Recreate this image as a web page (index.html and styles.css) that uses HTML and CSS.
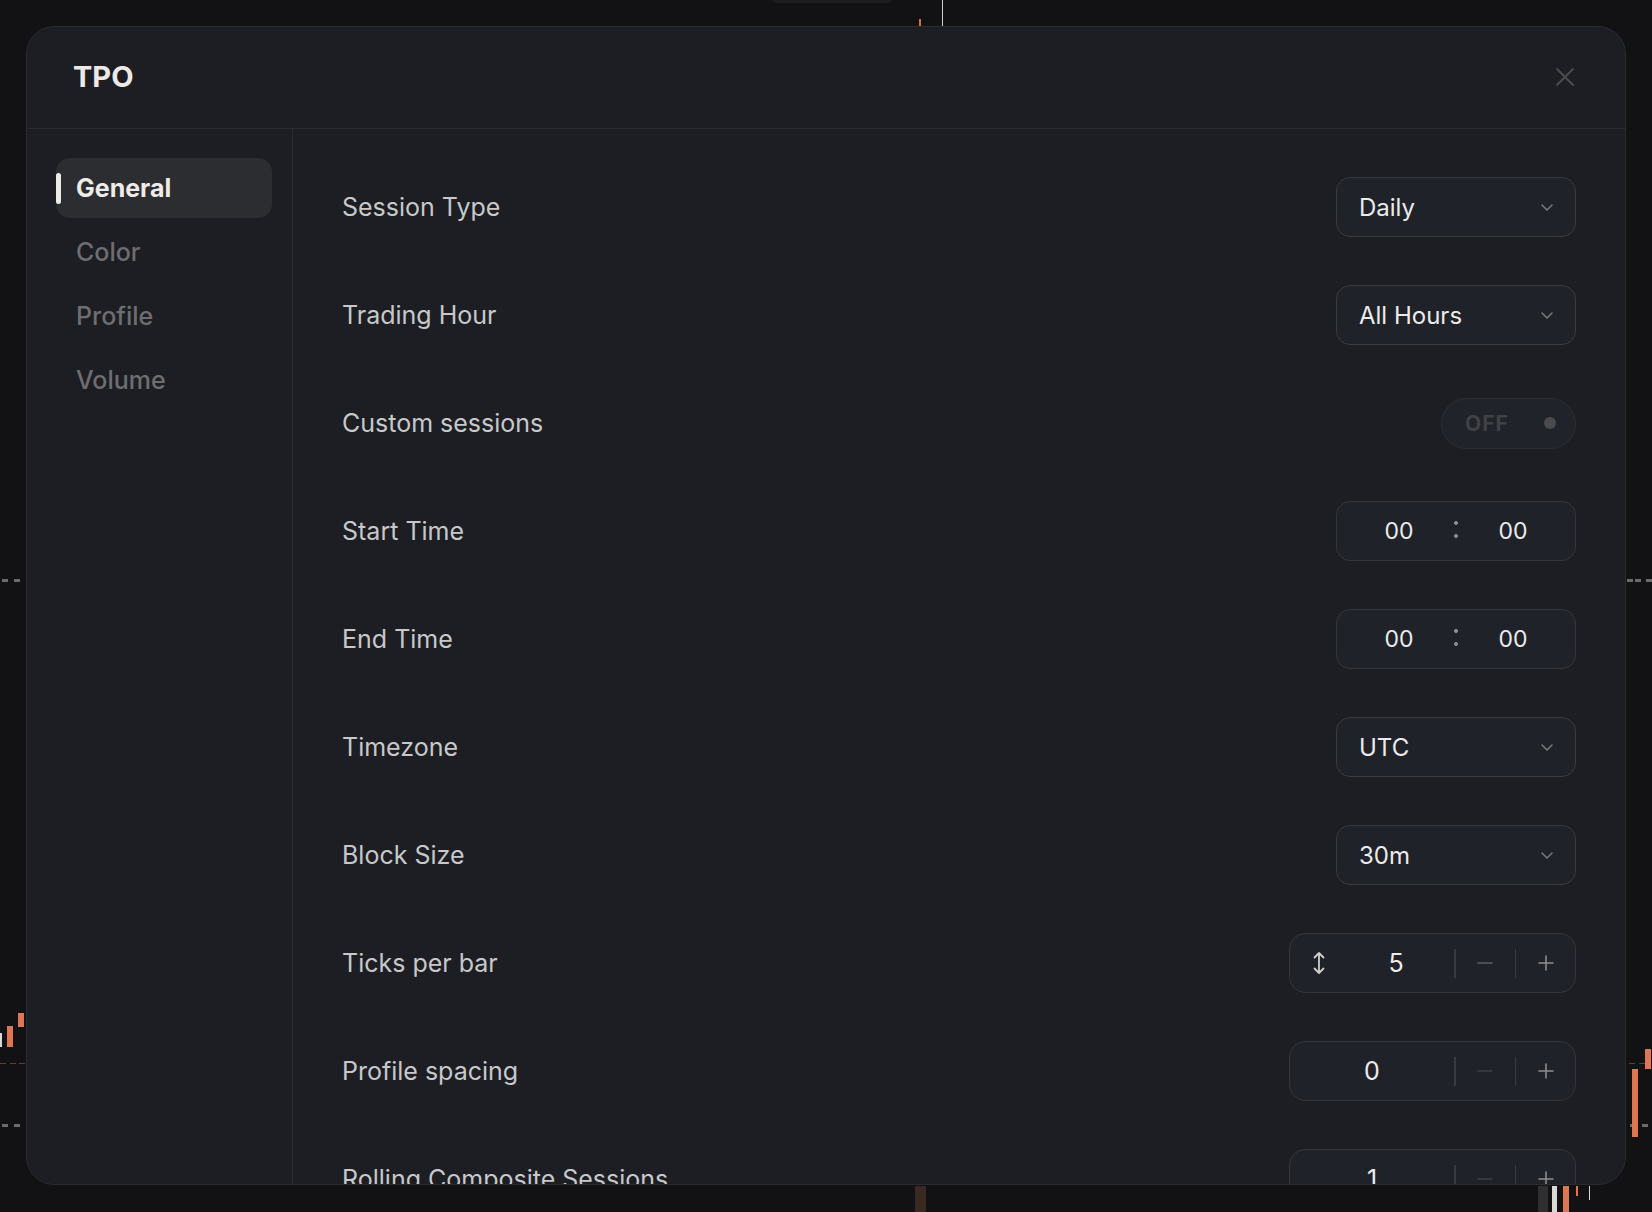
FILE: index.html
```html
<!DOCTYPE html>
<html lang="en">
<head>
    <meta charset="UTF-8">
    <meta name="viewport" content="width=device-width, initial-scale=1.0">
    <title>TPO Settings</title>
    <link rel="stylesheet" href="styles.css">
</head>
<body>

    <!-- Chart bits peeking out behind the dialog -->
    <div class="chart">
        <span class="mark top-pill"></span>
        <span class="mark top-line"></span>
        <span class="mark top-tick"></span>
        <span class="mark dash-grey" style="left:2px;top:579px"></span>
        <span class="mark dash-grey" style="left:14px;top:579px"></span>
        <span class="mark dash-grey" style="left:1627px;top:579px"></span>
        <span class="mark dash-grey" style="left:1635px;top:579px"></span>
        <span class="mark dash-grey" style="left:1646px;top:579px"></span>
        <span class="mark dash-grey" style="left:2px;top:1124px"></span>
        <span class="mark dash-grey" style="left:14px;top:1124px"></span>
        <span class="mark dash-grey" style="left:1630px;top:1124px"></span>
        <span class="mark dash-grey" style="left:1642px;top:1124px"></span>
        <span class="mark candle-white" style="left:0;top:1033px;height:14px"></span>
        <span class="mark candle" style="left:7px;top:1026px;height:21px"></span>
        <span class="mark candle" style="left:18px;top:1013px;height:14px"></span>
        <span class="mark dash-red" style="left:0;top:1063px"></span>
        <span class="mark dash-red" style="left:10px;top:1063px"></span>
        <span class="mark dash-red" style="left:19px;top:1063px"></span>
        <span class="mark dash-red" style="left:1629px;top:1063px"></span>
        <span class="mark dash-red" style="left:1639px;top:1063px"></span>
        <span class="mark candle" style="left:1632px;top:1069px;height:68px"></span>
        <span class="mark candle" style="left:1645px;top:1049px;height:20px"></span>
        <span class="mark candle-dim" style="left:915px;top:1186px;height:26px"></span>
        <span class="mark candle-grey" style="left:1538px;top:1186px;height:26px"></span>
        <span class="mark candle-white" style="left:1552px;top:1186px;height:26px;width:5px"></span>
        <span class="mark candle" style="left:1563px;top:1186px;height:26px"></span>
        <span class="mark candle" style="left:1576px;top:1186px;height:10px;width:2px"></span>
        <span class="mark candle-white" style="left:1589px;top:1186px;height:14px;width:1px"></span>
    </div>

    <div class="modal">
        <header class="modal-header">
            <h1 class="modal-title">TPO</h1>
            <button class="close-btn" aria-label="Close">
                <svg width="18" height="18" viewBox="0 0 18 18"><path d="M1 1L17 17M17 1L1 17" stroke="#4e4e50" stroke-width="1.8" stroke-linecap="round"/></svg>
            </button>
        </header>

        <div class="modal-body">
            <nav class="side-nav">
                <a class="nav-item active">General</a>
                <a class="nav-item">Color</a>
                <a class="nav-item">Profile</a>
                <a class="nav-item">Volume</a>
            </nav>

            <div class="settings">
                <div class="row">
                    <span class="label">Session Type</span>
                    <div class="select"><span>Daily</span><svg class="chev" width="12" height="7" viewBox="0 0 12 7"><path d="M1 1L6 6L11 1" fill="none" stroke="#7a7a7c" stroke-width="1.5" stroke-linecap="round" stroke-linejoin="round"/></svg></div>
                </div>
                <div class="row">
                    <span class="label">Trading Hour</span>
                    <div class="select"><span>All Hours</span><svg class="chev" width="12" height="7" viewBox="0 0 12 7"><path d="M1 1L6 6L11 1" fill="none" stroke="#7a7a7c" stroke-width="1.5" stroke-linecap="round" stroke-linejoin="round"/></svg></div>
                </div>
                <div class="row">
                    <span class="label">Custom sessions</span>
                    <div class="toggle"><span class="toggle-text">OFF</span><span class="toggle-dot"></span></div>
                </div>
                <div class="row">
                    <span class="label">Start Time</span>
                    <div class="time"><span class="num">00</span><span class="colon"></span><span class="num">00</span></div>
                </div>
                <div class="row">
                    <span class="label">End Time</span>
                    <div class="time"><span class="num">00</span><span class="colon"></span><span class="num">00</span></div>
                </div>
                <div class="row">
                    <span class="label">Timezone</span>
                    <div class="select"><span>UTC</span><svg class="chev" width="12" height="7" viewBox="0 0 12 7"><path d="M1 1L6 6L11 1" fill="none" stroke="#7a7a7c" stroke-width="1.5" stroke-linecap="round" stroke-linejoin="round"/></svg></div>
                </div>
                <div class="row">
                    <span class="label">Block Size</span>
                    <div class="select"><span>30m</span><svg class="chev" width="12" height="7" viewBox="0 0 12 7"><path d="M1 1L6 6L11 1" fill="none" stroke="#7a7a7c" stroke-width="1.5" stroke-linecap="round" stroke-linejoin="round"/></svg></div>
                </div>
                <div class="row">
                    <span class="label">Ticks per bar</span>
                    <div class="stepper">
                        <div class="step-value">
                            <svg class="drag" width="14" height="24" viewBox="0 0 14 24"><path d="M7 2V22M2.5 6.5L7 2L11.5 6.5M2.5 17.5L7 22L11.5 17.5" fill="none" stroke="#cfcfcf" stroke-width="1.8" stroke-linecap="round" stroke-linejoin="round"/></svg>
                            <span class="val with-icon">5</span>
                        </div>
                        <span class="step-sep"></span>
                        <span class="step-btn minus"><svg width="16" height="16" viewBox="0 0 16 16"><path d="M1 8H15" stroke="currentColor" stroke-width="1.6" stroke-linecap="round"/></svg></span>
                        <span class="step-sep"></span>
                        <span class="step-btn"><svg width="16" height="16" viewBox="0 0 16 16"><path d="M1 8H15M8 1V15" stroke="currentColor" stroke-width="1.6" stroke-linecap="round"/></svg></span>
                    </div>
                </div>
                <div class="row">
                    <span class="label">Profile spacing</span>
                    <div class="stepper">
                        <div class="step-value"><span class="val">0</span></div>
                        <span class="step-sep"></span>
                        <span class="step-btn minus disabled"><svg width="16" height="16" viewBox="0 0 16 16"><path d="M1 8H15" stroke="currentColor" stroke-width="1.6" stroke-linecap="round"/></svg></span>
                        <span class="step-sep"></span>
                        <span class="step-btn"><svg width="16" height="16" viewBox="0 0 16 16"><path d="M1 8H15M8 1V15" stroke="currentColor" stroke-width="1.6" stroke-linecap="round"/></svg></span>
                    </div>
                </div>
                <div class="row">
                    <span class="label">Rolling Composite Sessions</span>
                    <div class="stepper">
                        <div class="step-value"><span class="val">1</span></div>
                        <span class="step-sep"></span>
                        <span class="step-btn minus disabled"><svg width="16" height="16" viewBox="0 0 16 16"><path d="M1 8H15" stroke="currentColor" stroke-width="1.6" stroke-linecap="round"/></svg></span>
                        <span class="step-sep"></span>
                        <span class="step-btn"><svg width="16" height="16" viewBox="0 0 16 16"><path d="M1 8H15M8 1V15" stroke="currentColor" stroke-width="1.6" stroke-linecap="round"/></svg></span>
                    </div>
                </div>
            </div>
        </div>
    </div>

</body>
</html>
```

FILE: styles.css
```css
/* General */
body {
    margin: 0;
    padding: 0;
    background-color: #121214;
    font-family: Inter, "Noto Sans", sans-serif;
    overflow: hidden;
    height: 1212px;
    position: relative;
}

/* Chart behind the dialog */
.chart {
    position: absolute;
    inset: 0;
}

.mark {
    position: absolute;
    display: block;
}

.top-pill {
    left: 772px;
    top: -8px;
    width: 120px;
    height: 11px;
    border-radius: 6px;
    background: #1c1c1e;
}

.top-line {
    left: 942px;
    top: 0;
    width: 1px;
    height: 26px;
    background: #cfcfcf;
}

.top-tick {
    left: 919px;
    top: 19px;
    width: 2px;
    height: 7px;
    background: #d4714f;
}

.dash-grey {
    width: 6px;
    height: 3px;
    background: #6b6b6d;
}

.dash-red {
    width: 6px;
    height: 1px;
    background: #6a3a2c;
}

.candle {
    width: 6px;
    background: #de7553;
}

.candle-white {
    width: 2px;
    background: #d8d8d8;
}

.candle-grey {
    width: 10px;
    background: #2f2f31;
}

.candle-dim {
    width: 11px;
    background: #3a2823;
}

/* Dialog */
.modal {
    position: relative;
    margin: 26px 0 0 26px;
    width: 1600px;
    height: 1159px;
    box-sizing: border-box;
    background: #1c1e24;
    border: 1px solid #2b2c2f;
    border-radius: 28px;
    overflow: hidden;
    display: flex;
    flex-direction: column;
}

.modal-header {
    height: 101px;
    flex-shrink: 0;
    display: flex;
    align-items: center;
    justify-content: space-between;
    padding: 0 51px 0 46px;
    border-bottom: 1px solid #2a2c31;
}

.modal-title {
    margin: 0;
    font-size: 29px;
    font-weight: 700;
    color: #ece9e6;
    position: relative;
    top: -1px;
}

.close-btn {
    background: none;
    border: 0;
    padding: 0;
    width: 18px;
    height: 18px;
    cursor: pointer;
    position: relative;
    top: -1px;
}

.modal-body {
    flex: 1;
    display: flex;
    min-height: 0;
}

/* Side navigation */
.side-nav {
    width: 216px;
    flex-shrink: 0;
    padding: 29px 20px 0 29px;
    border-right: 1px solid #2a2c31;
    display: flex;
    flex-direction: column;
    gap: 4px;
}

.nav-item {
    position: relative;
    height: 60px;
    display: flex;
    align-items: center;
    padding-left: 20px;
    border-radius: 14px;
    font-size: 25px;
    font-weight: 500;
    color: #6e6e70;
    cursor: pointer;
}

.nav-item.active {
    background: #2c2d31;
    color: #eeebe8;
    font-weight: 700;
}

.nav-item.active::before {
    content: "";
    position: absolute;
    left: 0;
    top: 15px;
    width: 5px;
    height: 31px;
    border-radius: 3px;
    background: #eeebe8;
}

/* Settings list */
.settings {
    flex: 1;
    padding: 48px 49px 0 49px;
    display: flex;
    flex-direction: column;
    gap: 48px;
    overflow: hidden;
}

.row {
    height: 60px;
    flex-shrink: 0;
    display: flex;
    align-items: center;
    justify-content: space-between;
}

.label {
    font-size: 25px;
    color: #c8c8c9;
}

.select {
    width: 240px;
    height: 60px;
    box-sizing: border-box;
    border: 1.5px solid #3a3b3f;
    border-radius: 14px;
    background: #202229;
    display: flex;
    align-items: center;
    justify-content: space-between;
    padding: 0 22px;
    font-size: 24px;
    font-weight: 400;
    color: #ecebea;
}

.toggle {
    width: 135px;
    height: 51px;
    box-sizing: border-box;
    border: 1.5px solid #2e2f33;
    border-radius: 26px;
    background: #21232a;
    display: flex;
    align-items: center;
    justify-content: space-between;
    padding: 0 19px 0 23px;
}

.toggle-text {
    font-size: 21px;
    font-weight: 700;
    color: #404146;
    letter-spacing: 1px;
}

.toggle-dot {
    width: 12px;
    height: 12px;
    border-radius: 50%;
    background: #4b4b4e;
}

.time {
    width: 240px;
    height: 60px;
    box-sizing: border-box;
    border: 1.5px solid #35363b;
    border-radius: 14px;
    background: #20222a;
    display: flex;
    align-items: center;
    justify-content: center;
    gap: 27px;
}

.time .num {
    width: 56px;
    text-align: center;
    font-size: 23px;
    font-weight: 400;
    color: #ecebea;
}

.time .colon {
    width: 4px;
    height: 17px;
    background:
        radial-gradient(circle, #8b8b8d 1.8px, transparent 2.2px) top / 4px 4px no-repeat,
        radial-gradient(circle, #8b8b8d 1.8px, transparent 2.2px) bottom / 4px 4px no-repeat;
    position: relative;
    top: -2px;
}

.stepper {
    width: 287px;
    height: 60px;
    box-sizing: border-box;
    border: 1.5px solid #35363b;
    border-radius: 16px;
    background: #20222a;
    display: flex;
    align-items: center;
}

.step-value {
    width: 164px;
    display: flex;
    align-items: center;
}

.drag {
    margin-left: 22px;
    flex-shrink: 0;
}

.val {
    flex: 1;
    text-align: center;
    font-size: 25px;
    font-weight: 400;
    color: #ecebea;
}

.val.with-icon {
    padding-left: 12px;
}

.step-sep {
    width: 1.5px;
    height: 29px;
    background: #3a3b40;
}

.step-btn {
    flex: 1;
    display: flex;
    align-items: center;
    justify-content: center;
    color: #8c8c8e;
    cursor: pointer;
}

.step-btn.minus {
    color: #5c5d61;
}

.step-btn.minus.disabled {
    color: #3e3f44;
}
```
